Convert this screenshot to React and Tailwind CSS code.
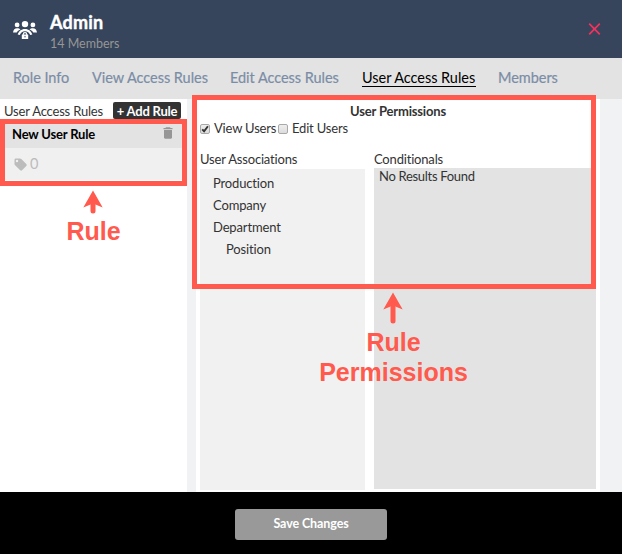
import React from "react";

const tabs = [
  { label: "Role Info", width: "w-[57px]" },
  { label: "View Access Rules", width: "w-[116px]" },
  { label: "Edit Access Rules", width: "w-[110px]" },
  { label: "User Access Rules", width: "w-[114px]", active: true },
  { label: "Members", width: "w-[60px]" },
];

function GroupLockIcon() {
  return (
    <svg className="h-[20px] w-[24px] shrink-0" viewBox="0 0 24 20" fill="none">
      <circle cx="4.1" cy="4.9" r="2.4" fill="#fff" />
      <circle cx="19.9" cy="4.9" r="2.4" fill="#fff" />
      <circle cx="12" cy="4.1" r="3.2" fill="#fff" />
      <path d="M0 12.400C.3 9.800 1.900 8.200 4.100 8.200c1.400 0 2.600.4 3.400 1.200-1.700.7-3 1.700-3.800 3z" fill="#fff" />
      <path d="M24 12.400c-.3-2.600-1.900-4.200-4.100-4.200-1.400 0-2.600.4-3.400 1.200 1.700.7 3 1.700 3.800 3z" fill="#fff" />
      <path d="M4.700 14.600C5.500 11.200 8.200 8.900 12 8.900s6.500 2.300 7.300 5.700l-2.100.5c-.9-2.400-2.700-3.800-5.200-3.800s-4.300 1.400-5.200 3.800z" fill="#fff" />
      <path d="M10.200 15v-.6a1.800 1.800 0 0 1 3.600 0v.6" stroke="#fff" strokeWidth="1.100" />
      <rect x="8.800" y="14.500" width="6.400" height="4.600" rx=".4" fill="#fff" />
      <rect x="11.500" y="15.900" width="1" height="1.500" fill="#36455b" />
    </svg>
  );
}

function TrashIcon() {
  return (
    <svg className="mb-[2px] h-[12px] w-[10px]" viewBox="0 0 10 12" fill="#969696">
      <path d="M3 .2h4l.6.8H9.500v1.200H.5V1h1.900zM1 3h8v7.600c0 .7-.5 1.100-1.100 1.100H2.100c-.6 0-1.100-.4-1.100-1.100z" />
    </svg>
  );
}

function TagIcon() {
  return (
    <svg className="h-[13px] w-[13px]" viewBox="0 0 13 13" fill="#bcbcbc">
      <path fillRule="evenodd" d="M.5 1.900C.5 1.100 1.100.5 1.900.5h4c.6 0 1 .2 1.400.6l5 5c.6.6.6 1.300 0 1.900L8 12.300c-.5.5-1.200.5-1.800 0l-5.100-5C.7 6.900.5 6.500.5 6zM3 4.200a1.200 1.200 0 1 0 0-2.400 1.200 1.200 0 0 0 0 2.400z" />
    </svg>
  );
}

function UpArrow() {
  return (
    <svg className="mr-px h-[32px] w-[20px]" viewBox="0 0 20 32" fill="none">
      <path d="M10 .5 19.700 17.500 10 13.500.3 17.500z" fill="#ff5a4d" />
      <path d="M10 12v17" stroke="#ff5a4d" strokeWidth="5" strokeLinecap="round" />
    </svg>
  );
}

function ShortUpArrow() {
  return (
    <svg className="mr-px h-[24px] w-[20px]" viewBox="0 0 20 24" fill="none">
      <path d="M10 .5 19.700 17.500 10 13.500.3 17.500z" fill="#ff5a4d" />
      <path d="M10 12v9" stroke="#ff5a4d" strokeWidth="5" strokeLinecap="round" />
    </svg>
  );
}

function Checkbox({ checked }) {
  return (
    <span className="flex h-[10px] w-[10px] shrink-0 items-center justify-center rounded-[2px] border border-[#a9a9a9] bg-gradient-to-b from-[#eeeeee] to-[#dcdcdc]">
      {checked && (
        <svg className="h-[8px] w-[8px]" viewBox="0 0 8 8" fill="none">
          <path d="M1.200 4.300 3.100 6.200 6.900 1.200" stroke="#333" strokeWidth="1.900" />
        </svg>
      )}
    </span>
  );
}

function Fit({ children, className = "" }) {
  return <span className={`block whitespace-nowrap ${className}`}>{children}</span>;
}

export default function App() {
  return (
    <div className="relative flex h-[554px] w-[622px] flex-col overflow-hidden bg-white font-['Lato',sans-serif] text-[13px] tracking-[-0.18px] text-[#333]">
      <header className="flex h-[58px] shrink-0 items-start bg-[#36455b] pl-[13px]">
        <div className="pt-[20px]"><GroupLockIcon /></div>
        <div className="ml-[13px] pt-[11px]">
          <Fit className="text-[18px] leading-[23px] font-bold tracking-[0.2px] text-white [-webkit-text-stroke:0.4px_white]">Admin</Fit>
          <Fit className="mt-px text-[12.500px] leading-[18px] tracking-normal text-[#969696]">14 Members</Fit>
        </div>
        <svg className="mt-[23px] mr-[21px] ml-auto h-[12px] w-[13px]" viewBox="0 0 13 12" stroke="#f5325f" strokeWidth="1.700">
          <path d="M1.200.7 11.800 11.300M11.800.7 1.200 11.300" />
        </svg>
      </header>

      <nav className="flex h-[41px] shrink-0 gap-[22px] bg-[#e3e3e3] pt-[10px] pl-[13px] text-[14.500px] leading-[20px] tracking-[-0.04px]">
        {tabs.map((t) => (
          <div key={t.label} className={`${t.width} h-[19px] whitespace-nowrap ${t.active ? "border-b border-black text-black" : "text-[#7b8da6] [-webkit-text-stroke:0.2px_#7b8da6]"}`}>
            {t.label}
          </div>
        ))}
      </nav>

      <main className="flex h-[393px] shrink-0 bg-[#f1f2f4]">
        <aside className="w-[187px] shrink-0 bg-white">
          <div className="flex h-[20px] items-start justify-between pt-[3px] pr-[6px] pl-[4px]">
            <Fit className="leading-[18px]">User Access Rules</Fit>
            <button className="flex h-[17px] w-[68px] items-center justify-center rounded-[2px] bg-[#333] pt-[2px] text-[13px] font-bold tracking-[-0.22px] whitespace-nowrap text-white">+ Add Rule</button>
          </div>
          <div className="mx-[5px] bg-[#f0f0f0]">
            <div className="flex h-[29px] items-center justify-between bg-[#e3e3e3] pr-[9px] pl-[7px]">
              <Fit className="pt-[2px] font-bold text-black">New User Rule</Fit>
              <TrashIcon />
            </div>
            <div className="flex h-[32px] items-center gap-[3px] pl-[9px] text-[14.500px] text-[#bcbcbc]">
              <TagIcon />
              <span>0</span>
            </div>
          </div>
        </aside>

        <section className="ml-[9px] w-[404px] shrink-0 bg-white pl-[4px]">
          <h2 className="h-[20px] pt-[3px] pr-[4px] text-center text-[13px] leading-[18px] font-bold">User Permissions</h2>
          <div className="flex h-[19px] items-center">
            <span className="pt-px"><Checkbox checked /></span>
            <Fit className="ml-[4px] w-[64px]">View Users</Fit>
            <span className="pt-px"><Checkbox /></span>
            <Fit className="ml-[4px]">Edit Users</Fit>
          </div>
          <div className="mt-[12px] flex gap-[9px]">
            <div className="w-[165px]">
              <Fit className="h-[19px] leading-[18px]">User Associations</Fit>
              <ul className="h-[321px] bg-[#f1f1f1] pt-[3px] pl-[13px] leading-[22px] tracking-[-0.15px]">
                <li>Production</li>
                <li>Company</li>
                <li>Department</li>
                <li className="pl-[13px]">Position</li>
              </ul>
            </div>
            <div className="w-[222px]">
              <Fit className="h-[18px] leading-[18px]">Conditionals</Fit>
              <div className="h-[321px] bg-[#e3e3e3] pl-[5px] leading-[16px] tracking-[-0.3px]">No Results Found</div>
            </div>
          </div>
        </section>
      </main>

      <footer className="flex h-[62px] shrink-0 items-start bg-black pt-[17px] pl-[235px]">
        <button className="h-[31px] w-[152px] rounded-[3px] bg-[#999] pb-px text-[12.500px] font-bold tracking-[-0.1px] text-white">Save Changes</button>
      </footer>

      <div className="absolute top-[119px] left-0 h-[67px] w-[187px] border-[5px] border-[#ff5a4d]" />
      <div className="absolute top-[190px] left-[43px] flex w-[101px] flex-col items-center font-['Liberation_Sans',Arial,sans-serif] text-[25px] leading-[30px] font-bold tracking-normal text-[#ff5a4d]">
        <ShortUpArrow />
        <span className="mt-[2px]">Rule</span>
      </div>
      <div className="absolute top-[95px] left-[192px] h-[194px] w-[404px] border-[5px] border-[#ff5a4d]" />
      <div className="absolute top-[292px] left-[313px] flex w-[161px] flex-col items-center text-center font-['Liberation_Sans',Arial,sans-serif] text-[25px] leading-[30px] font-bold tracking-normal text-[#ff5a4d]">
        <UpArrow />
        <span className="mt-[3px]">Rule<br />Permissions</span>
      </div>
    </div>
  );
}
